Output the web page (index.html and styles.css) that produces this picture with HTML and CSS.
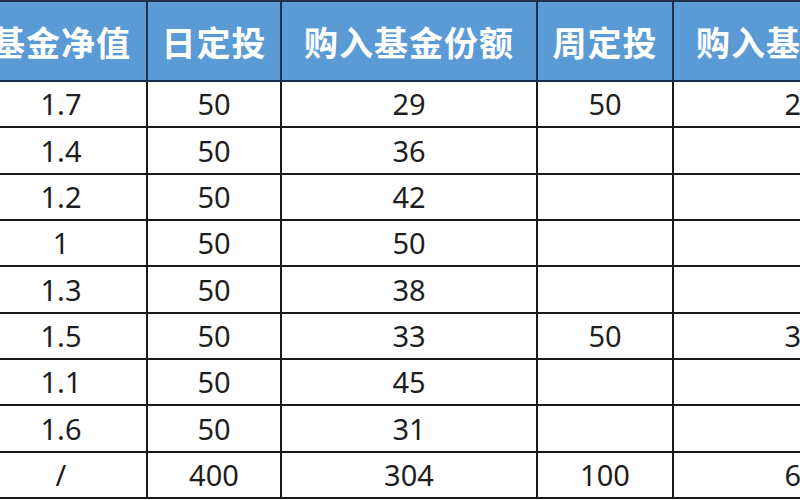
FILE: index.html
```html
<!DOCTYPE html>
<html lang="zh-CN">
<head>
<meta charset="utf-8">
<link rel="stylesheet" href="styles.css">
</head>
<body>
<div class="frame">
<table class="grid">
  <colgroup>
    <col class="c-nav">
    <col class="c-day">
    <col class="c-buy">
    <col class="c-week">
    <col class="c-buy">
  </colgroup>
  <thead>
    <tr>
      <th>基金净值</th>
      <th>日定投</th>
      <th>购入基金份额</th>
      <th>周定投</th>
      <th>购入基金份额</th>
    </tr>
  </thead>
  <tbody>
    <tr><td>1.7</td><td>50</td><td>29</td><td>50</td><td>29</td></tr>
    <tr><td>1.4</td><td>50</td><td>36</td><td></td><td></td></tr>
    <tr><td>1.2</td><td>50</td><td>42</td><td></td><td></td></tr>
    <tr><td>1</td><td>50</td><td>50</td><td></td><td></td></tr>
    <tr><td>1.3</td><td>50</td><td>38</td><td></td><td></td></tr>
    <tr><td>1.5</td><td>50</td><td>33</td><td>50</td><td>33</td></tr>
    <tr><td>1.1</td><td>50</td><td>45</td><td></td><td></td></tr>
    <tr><td>1.6</td><td>50</td><td>31</td><td></td><td></td></tr>
    <tr><td>/</td><td>400</td><td>304</td><td>100</td><td>62</td></tr>
  </tbody>
</table>
</div>
</body>
</html>
```
FILE: styles.css
```css
html, body {
  margin: 0;
  padding: 0;
  background: #ffffff;
}
.frame {
  width: 800px;
  height: 500px;
  overflow: hidden;
}
.grid {
  margin-left: -26px;
  border-collapse: collapse;
  table-layout: fixed;
  width: 952px;
}
.c-nav { width: 172px; }
.c-day { width: 134px; }
.c-buy { width: 256px; }
.c-week { width: 136px; }
.grid th {
  height: 78px;
  padding: 0;
  background: #5b9bd5;
  color: #ffffff;
  font-family: "Noto Sans CJK SC", "Noto Sans", sans-serif;
  font-weight: 700;
  font-size: 34px;
  letter-spacing: 1px;
  text-align: center;
  border: 2px solid #1c2f4d;
}
.grid td {
  height: 44.35px;
  padding: 0;
  color: #1e1e1e;
  font-family: "Noto Sans", "Open Sans", sans-serif;
  font-size: 29px;
  text-align: center;
  border: 2px solid #1a1a1a;
  line-height: 44px;
}
```
